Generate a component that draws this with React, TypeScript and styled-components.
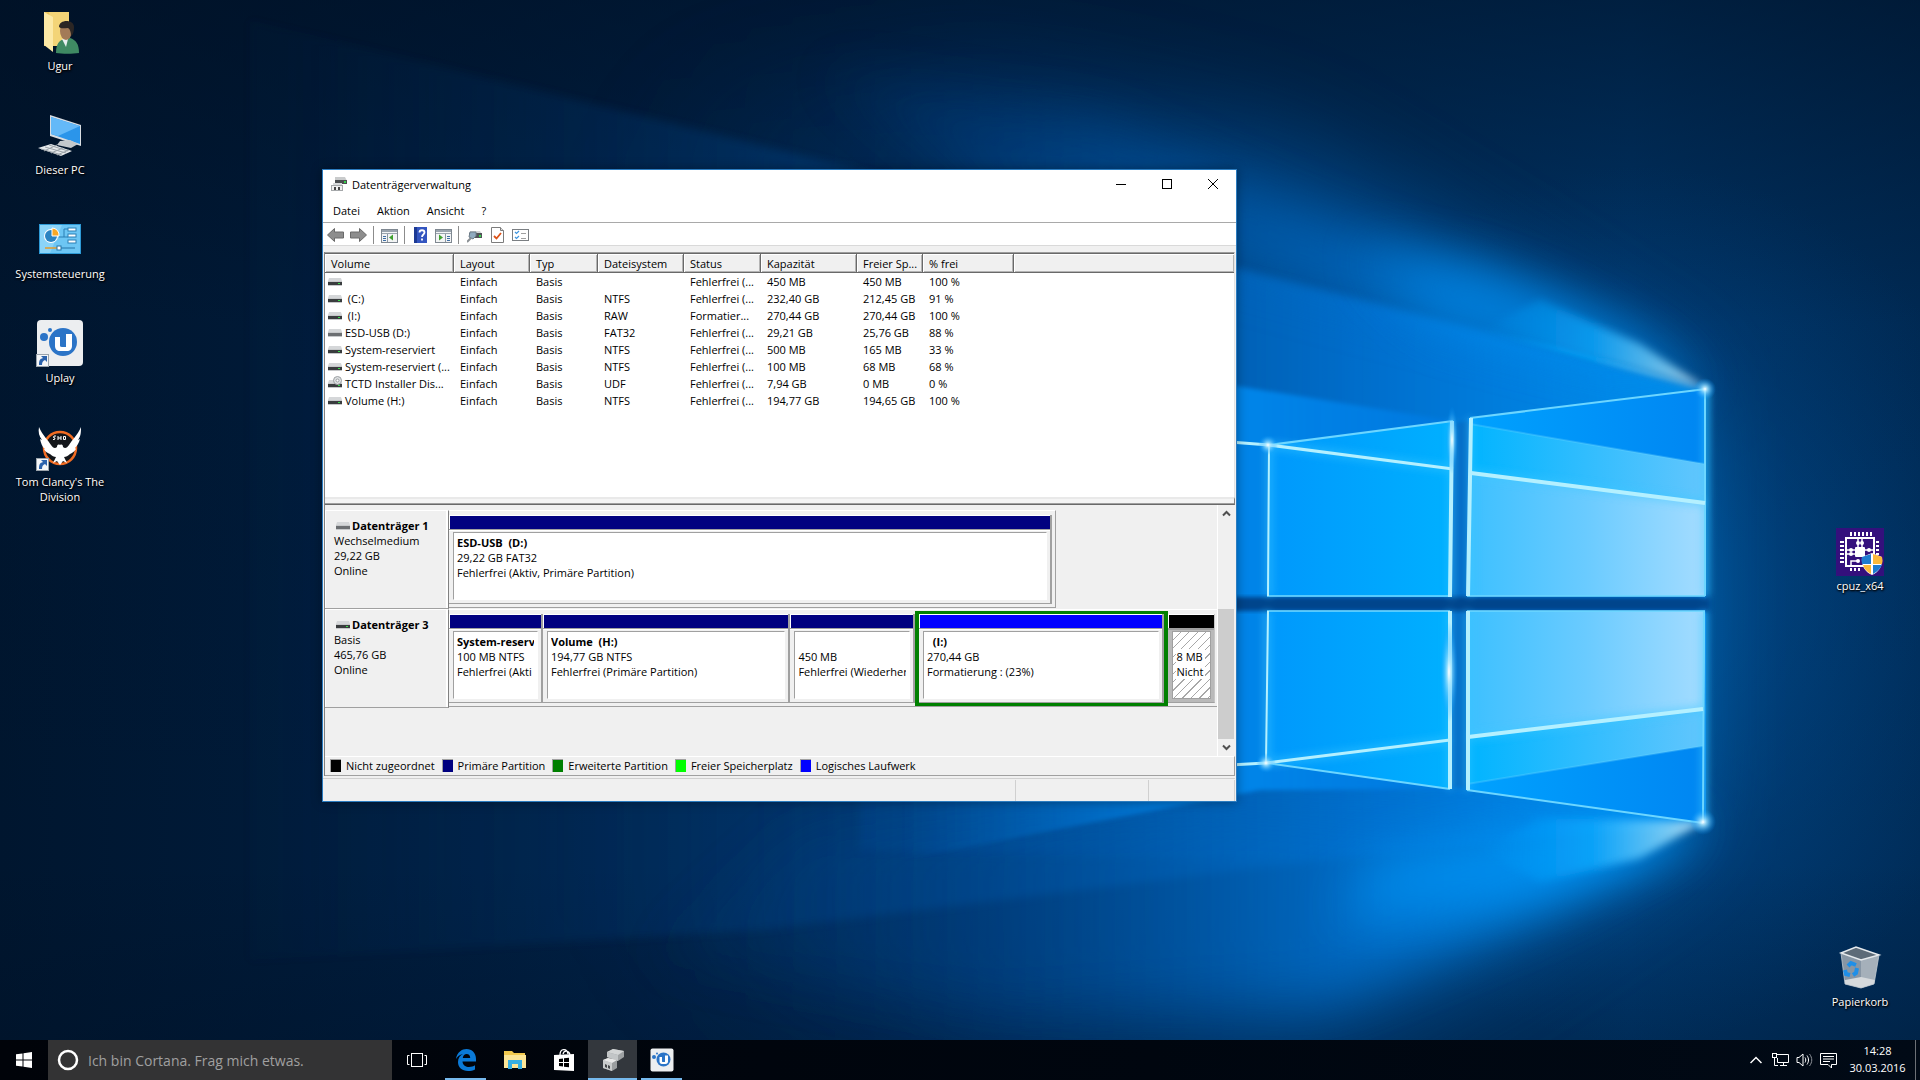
import React from "react";
import styled, { createGlobalStyle } from "styled-components";

const GlobalStyle = createGlobalStyle`
  *, *::before, *::after { box-sizing: border-box; }
  html, body { margin: 0; height: 100%; overflow: hidden; }
  body {
    font-family: "Segoe UI", "Open Sans", "Noto Sans", sans-serif;
    font-size: 11px;
    line-height: 15px;
    color: #000;
    background: #00172f;
  }
  button {
    font: inherit;
    color: inherit;
    background: none;
    border: 0;
    padding: 0;
    margin: 0;
    cursor: default;
  }
  svg { display: block; flex: none; }
`;

/* ---------- Desktop ---------- */

const Screen = styled.main`
  position: relative;
  display: flex;
  flex-direction: column;
  height: 100vh;
  overflow: hidden;
`;

const WallpaperArt = styled.svg`
  position: absolute;
  inset: 0;
  width: 100%;
  height: 100%;
`;

const DesktopGrid = styled.div`
  position: relative;
  flex: 1;
  min-height: 0;
  display: grid;
  grid-template-columns: 120px 1fr 120px;
  grid-template-rows: repeat(10, 104px);
  padding-top: 8px;
  overflow: hidden;
`;

const Shortcut = styled.button<{ $col: number; $row: number }>`
  grid-column: ${(p) => p.$col};
  grid-row: ${(p) => p.$row};
  display: flex;
  flex-direction: column;
  align-items: center;
  gap: 2px;
  color: #fff;
  text-shadow: 1px 1px 2px #000, 0 1px 2px #000;
  align-self: start;
`;

const ShortcutLabel = styled.span`
  max-width: 108px;
  text-align: center;
`;

/* ---------- Window ---------- */

const AppWindow = styled.section`
  position: absolute;
  left: 322px;
  top: 169px;
  width: 915px;
  display: flex;
  flex-direction: column;
  background: #f0f0f0;
  border: 1px solid #2b7cc0;
  box-shadow: 0 0 10px rgba(0, 0, 0, 0.35);
`;

const TitleBar = styled.header`
  display: flex;
  align-items: center;
  height: 28px;
  padding-left: 8px;
  background: #fff;
`;

const Title = styled.h1`
  flex: 1;
  margin: 0 0 0 5px;
  font-size: 11px;
  font-weight: 400;
`;

const CaptionButton = styled.button`
  display: flex;
  align-items: center;
  justify-content: center;
  width: 46px;
  height: 28px;
`;

const MenuBar = styled.nav`
  display: flex;
  align-items: center;
  gap: 17px;
  height: 25px;
  padding-left: 10px;
  background: #fff;
  border-bottom: 1px solid #a9a9a9;
`;

const ToolBar = styled.div`
  display: flex;
  align-items: center;
  height: 23px;
  padding: 2px 0 0 1px;
  background: #fff;
  border-bottom: 1px solid #d9d9d9;
`;

const ToolButton = styled.button`
  display: flex;
  align-items: center;
  justify-content: center;
  width: 23px;
  height: 20px;
`;

const ToolDivider = styled.span`
  width: 1px;
  height: 18px;
  margin: 0 4px 0 3px;
  background: #8c8c8c;
`;

const Body = styled.div`
  margin: 6px 1px 0;
  border-left: 1px solid #808080;
`;

/* ---------- Volume list ---------- */

const VolumePane = styled.div`
  height: 245px;
  background: #fff;
  border-top: 1px solid #9c9c9c;
  border-right: 1px solid #e3e3e3;
  box-shadow: inset 0 1px 0 #696969;
  padding-top: 1px;
`;

const VolumeTable = styled.table`
  width: 100%;
  table-layout: fixed;
  border-collapse: separate;
  border-spacing: 0;
  white-space: pre;
`;

const Col = styled.col<{ $w?: number }>`
  ${(p) => (p.$w ? `width: ${p.$w}px;` : "")}
`;

const HeadCell = styled.th`
  height: 19px;
  padding: 0 0 0 6px;
  overflow: hidden;
  text-align: left;
  font-weight: 400;
  background: #f0f0f0;
  border-bottom: 1px solid #696969;
  border-right: 1px solid #696969;
  box-shadow: inset 1px 1px 0 #fff, inset -1px -1px 0 #b4b4b4;
  &:last-child { border-right: 0; }
`;

const Cell = styled.td`
  height: 17px;
  padding: 0 0 0 6px;
  overflow: hidden;
  line-height: 15px;
`;

const VolumeCell = styled(Cell)`
  padding-left: 3px;
`;

const VolumeName = styled.span`
  display: flex;
  align-items: center;
  gap: 3px;
  height: 15px;
`;

const Splitter = styled.div`
  height: 8px;
  border-top: 2px solid #e9e9e9;
  border-bottom: 1px solid #696969;
  border-right: 1px solid #808080;
  background: #f4f4f4;
  box-shadow: inset 0 -1px 0 #a0a0a0;
`;

/* ---------- Disk graph ---------- */

const GraphPane = styled.div`
  display: grid;
  grid-template-columns: 1fr 16px;
  height: 251px;
  padding-right: 1px;
`;

const DiskList = styled.div`
  padding-top: 5px;
  border-right: 1px solid #fff;
`;

const DiskRow = styled.div`
  display: grid;
  grid-template-columns: 124px 1fr;
  height: 99px;
`;

const DiskLabel = styled.div`
  padding: 7px 0 0 9px;
  border-top: 1px solid #fff;
  border-right: 1px solid #808080;
  border-bottom: 1px solid #a0a0a0;
  box-shadow: inset -2px 0 0 #fff, inset 1px 0 0 #fff;
`;

const DiskName = styled.div`
  display: flex;
  align-items: center;
  gap: 2px;
  padding-left: 2px;
  font-weight: 700;
`;

const DiskBar = styled.div<{ $right: number }>`
  display: flex;
  height: 98px;
  margin-right: ${(p) => p.$right}px;
  padding: 4px ${(p) => (p.$right ? 3 : 2)}px 3px 0;
  border-top: 1px solid #fff;
  border-bottom: 1px solid #a0a0a0;
  border-right: ${(p) => (p.$right ? "1px solid #a0a0a0" : "0")};
`;

const PartitionFrame = styled.div<{ $span: number; $selected?: boolean; $free?: boolean }>`
  position: relative;
  z-index: ${(p) => (p.$selected ? 1 : 0)};
  flex: ${(p) => p.$span} ${(p) => p.$span} 0;
  min-width: 0;
  display: flex;
  flex-direction: column;
  margin: 0 ${(p) => (p.$selected ? 4 : 0)}px;
  background: ${(p) => (p.$free ? "#b9b9b9" : "#f0f0f0")};
  border-right: ${(p) => (p.$free ? "1px solid #c6c6c6" : "2px solid #a0a0a0")};
  border-bottom: 1px solid #a0a0a0;
  box-shadow: ${(p) =>
    p.$selected ? "1px 0 0 3px #008000, -1px 0 0 3px #008000" : "none"};
`;

const Strip = styled.div<{ $color: string }>`
  height: 14px;
  background: ${(p) => p.$color};
  border-top: 1px solid #fff;
  border-left: 1px solid #fff;
`;

const PartitionBox = styled.div<{ $free?: boolean }>`
  flex: 1;
  margin: 1px 3px 3px 4px;
  padding: 2px 3px 0;
  overflow: hidden;
  border: 1px solid #a0a0a0;
  border-right-color: ${(p) => (p.$free ? "#a0a0a0" : "#fff")};
  border-bottom-color: ${(p) => (p.$free ? "#a0a0a0" : "#fff")};
  background: ${(p) =>
    p.$free
      ? "repeating-linear-gradient(135deg, #fff 0 5px, #a8a8a8 5px 6px)"
      : "#fff"};
`;

const PartitionEdge = styled.div<{ $free?: boolean }>`
  height: 2px;
  background: ${(p) => (p.$free ? "#a0a0a0" : "#fff")};
  border-top: 1px solid #a0a0a0;
`;

const PartitionLine = styled.div<{ $bold?: boolean }>`
  height: 15px;
  overflow: hidden;
  white-space: pre;
  font-weight: ${(p) => (p.$bold ? 700 : 400)};
`;

const Plate = styled.span`
  display: inline-block;
  padding-right: 2px;
  background: #fff;
`;

const ScrollTrack = styled.div`
  display: grid;
  grid-template-rows: 17px 87px 130px 17px;
  background: #f0f0f0;
`;

const ScrollArrow = styled.button<{ $row: number }>`
  grid-row: ${(p) => p.$row};
  display: flex;
  align-items: center;
  justify-content: center;
`;

const ScrollThumb = styled.div`
  grid-row: 3;
  background: #cdcdcd;
`;

const Legend = styled.ul`
  display: flex;
  align-items: center;
  gap: 7px;
  height: 20px;
  margin: 0;
  padding: 0 0 1px 5px;
  list-style: none;
  border-top: 1px solid #fff;
  border-right: 1px solid #a0a0a0;
  border-bottom: 1px solid #a0a0a0;
`;

const LegendItem = styled.li`
  display: flex;
  align-items: center;
  gap: 5px;
`;

const Swatch = styled.span<{ $color: string }>`
  width: 11px;
  height: 13px;
  background: ${(p) => p.$color};
  border-top: 1px solid #a0a0a0;
  border-left: 1px solid #a0a0a0;
`;

const StatusBar = styled.footer`
  display: grid;
  grid-template-columns: 1fr 133px 86px;
  height: 23px;
  margin: 2px 1px 0 0;
  padding-top: 1px;
  border-top: 1px solid #d0d0d0;
`;

const StatusCell = styled.div`
  border-right: 1px solid #d0d0d0;
`;

/* ---------- Taskbar ---------- */

const TaskBar = styled.footer`
  position: relative;
  display: flex;
  height: 40px;
  color: #fff;
  background: linear-gradient(90deg, #000309, #00060f 60%, #010a16);
`;

const TaskButton = styled.button<{ $active?: boolean; $open?: boolean }>`
  display: flex;
  align-items: center;
  justify-content: center;
  width: 49px;
  position: relative;
  background: ${(p) => (p.$active ? "#33373d" : "transparent")};
  &::after {
    content: "";
    position: absolute;
    bottom: 0;
    left: ${(p) => (p.$active ? 0 : 4)}px;
    right: ${(p) => (p.$active ? 0 : 4)}px;
    height: 2px;
    background: ${(p) => (p.$active || p.$open ? "#76b9ed" : "transparent")};
  }
`;

const StartButton = styled(TaskButton)`
  width: 48px;
`;

const Search = styled.label`
  display: flex;
  align-items: center;
  gap: 9px;
  width: 344px;
  padding-left: 9px;
  background: #333334;
`;

const SearchInput = styled.input`
  flex: 1;
  min-width: 0;
  border: 0;
  padding: 0;
  outline: 0;
  background: transparent;
  color: #fff;
  font-family: inherit;
  font-size: 14px;
  &::placeholder { color: #a0a0a0; opacity: 1; }
`;

const Tray = styled.div`
  display: flex;
  align-items: center;
  margin-left: auto;
`;

const TrayButton = styled.button`
  display: flex;
  align-items: center;
  justify-content: center;
  width: 24px;
  height: 40px;
`;

const Clock = styled.button`
  display: flex;
  flex-direction: column;
  align-items: center;
  justify-content: center;
  width: 75px;
  padding-bottom: 2px;
  line-height: 17px;
`;

const ShowDesktop = styled.button`
  width: 5px;
  height: 40px;
  border-left: 1px solid #6c7076;
`;

/* ---------- Drawings ---------- */

const Wallpaper = () => (
  <WallpaperArt viewBox="0 0 1920 1080" preserveAspectRatio="xMidYMid slice" aria-hidden="true">
    <defs>
      <linearGradient id="base" x1="0" x2="1">
        <stop offset="0" stopColor="#00162f" />
        <stop offset="0.25" stopColor="#001e40" />
        <stop offset="0.5" stopColor="#002a56" />
        <stop offset="0.85" stopColor="#00386e" />
        <stop offset="1" stopColor="#002c58" />
      </linearGradient>
      <linearGradient id="shade" x1="0" x2="0" y1="0" y2="1">
        <stop offset="0" stopColor="#000f22" stopOpacity="0.6" />
        <stop offset="0.3" stopColor="#000f22" stopOpacity="0.1" />
        <stop offset="0.8" stopColor="#000f22" stopOpacity="0" />
        <stop offset="1" stopColor="#000f22" stopOpacity="0.35" />
      </linearGradient>
      <linearGradient id="fan" gradientUnits="userSpaceOnUse" x1="280" x2="1706" y1="0" y2="0">
        <stop offset="0" stopColor="#003468" stopOpacity="0.1" />
        <stop offset="0.35" stopColor="#004488" stopOpacity="0.6" />
        <stop offset="0.6" stopColor="#0060b4" stopOpacity="0.95" />
        <stop offset="0.78" stopColor="#0078dc" />
        <stop offset="1" stopColor="#009cff" />
      </linearGradient>
      <linearGradient id="glow" gradientUnits="userSpaceOnUse" x1="600" x2="1706" y1="0" y2="0">
        <stop offset="0" stopColor="#003a78" stopOpacity="0" />
        <stop offset="0.35" stopColor="#004a94" stopOpacity="0.5" />
        <stop offset="0.7" stopColor="#0072d0" stopOpacity="0.9" />
        <stop offset="1" stopColor="#009cff" />
      </linearGradient>
      <linearGradient id="inner" gradientUnits="userSpaceOnUse" x1="900" x2="1480" y1="0" y2="0">
        <stop offset="0" stopColor="#0072d0" stopOpacity="0" />
        <stop offset="0.6" stopColor="#0088ee" stopOpacity="0.9" />
        <stop offset="1" stopColor="#0078e0" stopOpacity="0.8" />
      </linearGradient>
      <linearGradient id="paneL" x1="0" x2="1">
        <stop offset="0" stopColor="#0098fc" />
        <stop offset="1" stopColor="#00b0ff" />
      </linearGradient>
      <linearGradient id="paneR" x1="0" x2="1">
        <stop offset="0" stopColor="#3cc0ff" />
        <stop offset="0.5" stopColor="#6acbff" />
        <stop offset="1" stopColor="#a4dcff" />
      </linearGradient>
      <linearGradient id="paneMid" x1="0" x2="1">
        <stop offset="0" stopColor="#00b4ff" />
        <stop offset="1" stopColor="#62c6fd" />
      </linearGradient>
      <linearGradient id="paneDeep" x1="0" x2="1">
        <stop offset="0" stopColor="#00a2ff" />
        <stop offset="1" stopColor="#0086f2" />
      </linearGradient>
      <linearGradient id="wedge" gradientUnits="userSpaceOnUse" x1="1480" x2="1706" y1="0" y2="0">
        <stop offset="0" stopColor="#00a0ff" stopOpacity="0" />
        <stop offset="0.5" stopColor="#10acff" stopOpacity="0.9" />
        <stop offset="0.85" stopColor="#9ce2ff" />
        <stop offset="1" stopColor="#fff" />
      </linearGradient>
      <radialGradient id="flare">
        <stop offset="0" stopColor="#fff" />
        <stop offset="0.25" stopColor="#a8e6ff" stopOpacity="0.8" />
        <stop offset="1" stopColor="#0098ff" stopOpacity="0" />
      </radialGradient>
      <radialGradient id="halo">
        <stop offset="0" stopColor="#0068bc" stopOpacity="0.5" />
        <stop offset="1" stopColor="#004a90" stopOpacity="0" />
      </radialGradient>
      <filter id="b2" x="-20%" y="-20%" width="140%" height="140%"><feGaussianBlur stdDeviation="2" /></filter>
      <filter id="b4" x="-20%" y="-20%" width="140%" height="140%"><feGaussianBlur stdDeviation="4" /></filter>
      <filter id="b12" x="-40%" y="-40%" width="180%" height="180%"><feGaussianBlur stdDeviation="14" /></filter>
      <filter id="b24" x="-40%" y="-40%" width="180%" height="180%"><feGaussianBlur stdDeviation="26" /></filter>
      <filter id="b50" x="-60%" y="-60%" width="220%" height="220%"><feGaussianBlur stdDeviation="50" /></filter>
    </defs>
    <rect width="1920" height="1080" fill="url(#base)" />
    <rect width="1920" height="1080" fill="url(#shade)" />
    <ellipse cx="1640" cy="605" rx="380" ry="440" fill="url(#halo)" />
    <polygon points="1680,395 1500,280 1280,140 980,60 700,80 500,300 500,850 700,1000 1000,1090 1300,1060 1480,960 1680,825" fill="url(#glow)" opacity="0.6" filter="url(#b50)" />
    <polygon points="1706,389 1237,269 780,150 250,20 250,960 760,930 1240,870 1703,823" fill="url(#fan)" filter="url(#b4)" opacity="0.6" />
    <polygon points="1706,389 1237,269 860,172 860,850 1240,860 1703,823" fill="url(#fan)" filter="url(#b4)" opacity="0.5" />
    <polygon points="1704,389 1237,269 1000,205 820,70 1100,120 1340,230 1540,300" fill="url(#glow)" opacity="0.7" filter="url(#b24)" />
    <polygon points="1703,823 1237,800 800,830 640,960 1000,1010 1330,1000 1560,900" fill="url(#glow)" opacity="0.9" filter="url(#b24)" />
    <polygon points="1706,389 1440,322 1360,250 1480,270 1620,330" fill="#0090f4" opacity="0.6" filter="url(#b24)" />
    <polygon points="1703,823 1560,828 1380,860 1340,920 1500,900 1630,862" fill="#0098fa" opacity="0.7" filter="url(#b24)" />
    <polygon points="1453,421 1200,380 900,330 900,860 1260,790 1450,789" fill="url(#inner)" filter="url(#b2)" />
    <polygon points="1706,388 1480,330 1540,300 1640,344" fill="url(#wedge)" opacity="0.75" filter="url(#b4)" />
    <polygon points="1706,389 1480,330 1560,348" fill="url(#wedge)" filter="url(#b2)" />
    <polygon points="1703,822 1540,818 1480,850 1540,882 1640,858" fill="url(#wedge)" opacity="0.8" filter="url(#b4)" />
    <polygon points="1706,389 1706,823 1467,790 1467,418" fill="#0080e6" />
    <polygon points="1453,423 1469,421 1469,788 1450,787" fill="#0068c4" filter="url(#b2)" />
    <rect x="800" y="597" width="910" height="14" fill="#00458c" filter="url(#b2)" />
    <polygon points="1269,445 1453,421 1450,597 1267,596" fill="url(#paneL)" />
    <polygon points="1267,611 1450,611 1450,789 1266,763" fill="url(#paneL)" />
    <polygon points="1470,418 1706,389 1705,596 1467,596" fill="url(#paneDeep)" />
    <polygon points="1470,424 1705,464 1705,596 1467,596" fill="url(#paneMid)" />
    <polygon points="1470,473 1705,503 1705,596 1467,596" fill="url(#paneR)" />
    <polygon points="1467,611 1705,611 1703,823 1467,790" fill="url(#paneDeep)" />
    <polygon points="1467,611 1705,611 1703,746 1467,784" fill="url(#paneMid)" />
    <polygon points="1467,611 1705,611 1704,709 1467,737" fill="url(#paneR)" />
    <g fill="none" stroke="#3cc8ff" strokeWidth="6" opacity="0.6" filter="url(#b4)">
      <path d="M1269 445V596M1452 421V597M1470 418V596M1706 389V596M1267 611V763M1450 611V789M1467 611V790M1704 611V823M1269 445L1453 469M1471 473L1705 503M1266 763L1450 740M1468 737L1703 709" />
    </g>
    <g fill="none" stroke="#6cd6ff" strokeWidth="2">
      <path d="M1269 445L1453 421M1470 418L1706 389M1266 763L1450 789M1467 790L1703 823M1705 389V596M1704 611L1703 823" />
      <path d="M1267 596H1450M1267 611H1450M1467 596H1705M1467 611H1705" opacity="0.8" />
      <path d="M1470 424L1705 464M1467 784L1703 746" opacity="0.3" />
    </g>
    <g fill="none" stroke="#b4f0ff" strokeWidth="3">
      <path d="M1269 445L1268 596M1268 611L1266 763" strokeWidth="2" />
      <path d="M1230 442L1269 445L1453 469M1230 765L1266 763L1450 740" />
      <path d="M1452 421L1450 597M1450 611V789M1471 418L1468 596M1468 611V790" strokeWidth="4" />
      <path d="M1471 473L1705 503M1468 737L1703 709" strokeWidth="4" />
    </g>
    <ellipse cx="1452" cy="440" rx="6" ry="34" fill="url(#flare)" />
    <ellipse cx="1449" cy="672" rx="9" ry="50" fill="url(#flare)" />
    <circle cx="1705" cy="389" r="11" fill="url(#flare)" />
    <circle cx="1703" cy="822" r="13" fill="url(#flare)" />
    <circle cx="1268" cy="445" r="10" fill="url(#flare)" />
    <circle cx="1266" cy="763" r="10" fill="url(#flare)" />
  </WallpaperArt>
);

const UserFolderIcon = () => (
  <svg width="48" height="48" viewBox="0 0 48 48">
    <path d="M8 4h25v34H8z" fill="#e9c35a" />
    <path d="M13 4h20v34H17z" fill="#f3d477" />
    <path d="M8 4l9 5v35l-9-7z" fill="#fce9a6" />
    <path d="M20 45c0-9 3-13 9-14l5-1c6 2 9 6 9 15-6 1-17 1-23 0z" fill="#3f8a63" />
    <path d="M26 31l4 8 2-8z" fill="#e8eef0" />
    <ellipse cx="30" cy="23" rx="6" ry="9" fill="#a37a57" />
    <path d="M23 19c0-8 15-8 15 0 0 4-1 8-3 9 0-4-1-7-3-8-4 0-7 1-9-1z" fill="#2b2624" />
  </svg>
);

const ComputerIcon = () => (
  <svg width="48" height="48" viewBox="0 0 48 48">
    <path d="M14 3l31 10v21L14 24z" fill="#d8dde2" />
    <path d="M15 5l29 9v18L15 22z" fill="#2b95ea" />
    <path d="M15 5l29 9-22 10-7-2z" fill="#64b9f8" />
    <path d="M24 29l10-1 8 4-7 4-14-3z" fill="#c3c8cc" />
    <path d="M2 36l13-4 21 7-11 5z" fill="#e6e9eb" />
    <path d="M5 37l21 6M9 35l21 6M13 33l19 6M8 39l13-6M15 41l12-5M21 43l12-5" stroke="#9aa2a8" strokeWidth="1" />
  </svg>
);

const ControlPanelIcon = () => (
  <svg width="48" height="48" viewBox="0 0 48 48">
    <rect x="3" y="8" width="42" height="30" fill="#2e9ad6" />
    <rect x="4" y="9" width="40" height="28" fill="#6dc6f4" />
    <path d="M4 9h22L14 37H4z" fill="#8bd4f8" />
    <circle cx="15" cy="20" r="7" fill="#fff" />
    <circle cx="15" cy="20" r="6" fill="#2a83c2" />
    <path d="M16 12v8h7a7 7 0 0 0-7-8z" fill="#f9a826" stroke="#fff" strokeWidth="1" />
    <path d="M23 21h5v-8h4M28 21h4" fill="none" stroke="#2a7fb4" strokeWidth="1" />
    <g fill="#fff" stroke="#2a7fb4" strokeWidth="1">
      <rect x="32" y="12" width="8" height="3" /><rect x="32" y="18" width="8" height="3" /><rect x="32" y="24" width="8" height="3" />
    </g>
    <path d="M9 32h12" stroke="#e39b2d" strokeWidth="1.5" />
    <path d="M24 32h15" stroke="#2574a8" strokeWidth="1" />
    <rect x="21" y="30" width="4" height="4" fill="#fff" stroke="#2574a8" />
  </svg>
);

const ShortcutArrow = () => (
  <g>
    <rect x="0.5" y="34.5" width="12" height="12" fill="#f4f6f8" stroke="#9aa3ab" />
    <path d="M3 45c0-5 1-6 4-7l-2-2h6v6l-2-2c-2 1-3 2-3 5z" fill="#2b62ac" />
  </g>
);

const UplayMark = () => (
  <>
    <rect x="1" y="0" width="46" height="46" rx="4" fill="#eceef0" />
    <circle cx="27" cy="22" r="14" fill="#2b74c7" />
    <circle cx="8" cy="17" r="4" fill="#2b74c7" />
    <circle cx="14" cy="10" r="2" fill="#2b74c7" />
    <path d="M19 17h5v8c0 1 0 2 2 2h4V14h6v12c0 3-2 5-5 5h-7c-3 0-5-2-5-5z" fill="#fff" />
  </>
);

const UplayIcon = () => (
  <svg width="48" height="48" viewBox="0 0 48 48"><UplayMark /><ShortcutArrow /></svg>
);

const DivisionIcon = () => (
  <svg width="48" height="48" viewBox="0 0 48 48">
    <circle cx="24" cy="24" r="16" fill="#14161a" stroke="#f26c22" strokeWidth="2.5" />
    <path d="M24 21c2-1 3 0 3 2 2 2 4 1 6-2 3-5 8-9 12-18 0 5 0 9-3 13l2-1c-1 4-3 7-5 9l1 1c-2 3-4 4-6 5-2 2-4 3-6 3l3 6-4-2-3 4-3-4-4 2 3-6c-2 0-4-1-6-3-2-1-5-2-6-5h1c-3-2-4-6-5-10l2 1C3 12 2 8 3 3c4 9 9 13 12 18 2 3 4 4 6 2 0-2 1-3 3-2z" fill="#fff" />
    <path d="M20 12h-2l-.5 1.500 1.500.5-.5 1.500h-1.500M22 12v4M25 12v4M22 14h3M27.500 12.500h2v3h-2z" stroke="#fff" fill="none" strokeWidth="1" />
    <ShortcutArrow />
  </svg>
);

const CpuIcon = () => (
  <svg width="48" height="48" viewBox="0 0 48 48">
    <rect width="48" height="48" fill="#34107c" />
    <rect x="10" y="10" width="28" height="28" fill="none" stroke="#fff" strokeWidth="2" />
    <rect x="19" y="19" width="10" height="10" rx="1" fill="#fff" />
    <path d="M15 4v4M19 4v4M23 4v4M27 4v4M31 4v4M35 4v4M15 40v3M19 40v3M23 40v3M4 14h4M4 18h4M4 22h4M4 26h4M4 30h4M4 34h4M40 14h3M40 18h3M40 22h3M40 26h3" stroke="#fff" strokeWidth="2" />
    <path d="M22 19v-8M26 19v-8M19 22h-8M19 26h-8M29 22h8M15 37v-4h7" stroke="#fff" strokeWidth="1.5" fill="none" />
    <g fill="#fff"><circle cx="22" cy="15" r="2" /><circle cx="26" cy="15" r="2" /><circle cx="15" cy="22" r="2" /><circle cx="15" cy="26" r="2" /><circle cx="33" cy="22" r="2" /><circle cx="22" cy="33" r="2" /></g>
    <path d="M36 25l10 4c1 9-3 15-10 18-7-3-11-9-10-18z" fill="#fff" />
    <path d="M35 26v10h-9q-1-4 0-7z" fill="#1d7bd0" /><path d="M37 26l9 3q1 4 0 7h-9z" fill="#fbb93a" />
    <path d="M35 37v9q-6-3-8-9z" fill="#fbb93a" /><path d="M37 37h9q-3 6-9 9z" fill="#1d7bd0" />
  </svg>
);

const BinIcon = () => (
  <svg width="48" height="48" viewBox="0 0 48 48">
    <path d="M5 9l4 31 16 4V15z" fill="#8796a5" />
    <path d="M25 15v29l13-4 5-29z" fill="#a5b0ba" />
    <path d="M9 36l16-3 14 3-1 4-13 4-16-4z" fill="#d5d9dc" />
    <path d="M5 9l15-6 23 8-18 5z" fill="#5d6b78" stroke="#e6eaed" strokeWidth="1.5" />
    <path d="M5 9l4 31 16 4 13-4 5-29" fill="none" stroke="#c3ccd3" strokeWidth="0.8" />
    <g fill="none" stroke="#1e8fe8" strokeWidth="4"><path d="M12 22l3-3 5 2" /><path d="M21 24l-1 5-3 2" /><path d="M9 26l1 4 4 1" /></g>
  </svg>
);

const WindowIcon = () => (
  <svg width="16" height="16" viewBox="0 0 16 16">
    <path d="M4 1h10l2 4v3H4z" fill="#c9cbcc" />
    <path d="M4 4h12v4H4z" fill="#4b4e50" />
    <rect x="13" y="5" width="2" height="2" fill="#35d04a" />
    <path d="M2 7h9v4H2z" fill="#d8dadb" />
    <path d="M0 9h12v6H0z" fill="#a5a8aa" />
    <path d="M1 10h10v4H1z" fill="#f1f1f1" />
    <path d="M3 11h2v3H3zM7 11h2v3H7z" fill="#444" />
  </svg>
);

const DriveIcon = ({ kind }: { kind: "disk" | "usb" | "disc" }) => (
  <svg width="14" height="15" viewBox="0 0 14 15">
    <path d="M1 4h12l1 3H0z" fill="#d5d7d9" />
    <path d="M0 7h14v4H0z" fill={kind === "usb" ? "#6c6f72" : "#393c3e"} />
    <path d="M0 7h14v1H0zM0 11h14v1H0z" fill="#c6c8ca" />
    {kind !== "usb" && <rect x="10" y="9" width="2" height="1" fill="#39e04c" />}
    {kind === "disc" && (
      <g><circle cx="9.500" cy="4.500" r="4" fill="#dfe1e3" stroke="#9a9ea1" /><circle cx="9.500" cy="4.500" r="1.500" fill="#fff" stroke="#9a9ea1" /></g>
    )}
  </svg>
);

const ArrowIcon = ({ back }: { back?: boolean }) => (
  <svg width="17" height="16" viewBox="0 0 17 16">
    <path d={back ? "M0.500 8l7-6.500v3.500h9v6h-9v3.500z" : "M16.500 8l-7-6.500v3.500h-9v6h9v3.500z"} fill="#8d8d8d" stroke="#6a6a6a" />
  </svg>
);

const PanelIcon = ({ right }: { right?: boolean }) => (
  <svg width="17" height="16" viewBox="0 0 17 16">
    <rect x="0.500" y="2.500" width="16" height="13" fill="#f3f4f5" stroke="#7f8891" />
    <path d="M1 3h15v2H1z" fill="#9aa4ae" />
    <path d="M1 6.500h15" stroke="#9aa4ae" />
    {right ? (
      <><path d="M10.500 7v8" stroke="#8c97a1" /><path d="M12 9.500h3M12 11.500h3M12 13.500h3" stroke="#3d6ea5" /><path d="M4 7.500v6l4-3z" fill="#3fa12f" /></>
    ) : (
      <><path d="M6.500 7v8" stroke="#8c97a1" /><path d="M2 9.500h3M2 11.500h3M2 13.500h3" stroke="#3d6ea5" /><path d="M12 7.500v6l-4-3z" fill="#3fa12f" /></>
    )}
  </svg>
);

const HelpIcon = () => (
  <svg width="14" height="16" viewBox="0 0 14 16">
    <rect width="13" height="16" fill="#3355c0" />
    <rect width="3" height="16" fill="#1d3a94" />
    <path d="M5.500 5.500c0-3 5-3 5 0 0 2-2.500 2-2.500 4.500M8 11.500v2" fill="none" stroke="#fff" strokeWidth="1.800" />
  </svg>
);

const ConnectIcon = () => (
  <svg width="16" height="16" viewBox="0 0 16 16">
    <path d="M3 4h10l2 3H2z" fill="#d1d4d6" />
    <path d="M2 6h13v5H3z" fill="#505457" />
    <rect x="12" y="8" width="2" height="2" fill="#39d84b" />
    <path d="M3 5h6v4l-3 3-4-2z" fill="#8faabf" stroke="#6e7d89" />
    <path d="M4 11l-4 4" stroke="#8a8f93" strokeWidth="2" />
  </svg>
);

const CheckPageIcon = () => (
  <svg width="13" height="16" viewBox="0 0 13 16">
    <path d="M0.500 0.500h9l3 3v12h-12z" fill="#fff" stroke="#7c7c7c" />
    <path d="M9.500 0.500v3h3" fill="#ddd" stroke="#7c7c7c" />
    <path d="M3 9l2.500 2.500L10 6" fill="none" stroke="#dd5218" strokeWidth="1.800" />
  </svg>
);

const ListIcon = () => (
  <svg width="17" height="14" viewBox="0 0 17 14">
    <rect x="0.500" y="1.500" width="16" height="11" fill="#fff" stroke="#7b7f83" />
    <path d="M3 4l1.500 1.500L7 3M3 9l1.500 1.500L7 8" fill="none" stroke="#3e95df" strokeWidth="1.200" />
    <path d="M9 5.500h5M9 10.500h5" stroke="#a0a0a0" />
  </svg>
);

const ChevronIcon = ({ down }: { down?: boolean }) => (
  <svg width="9" height="7" viewBox="0 0 9 7">
    <path d={down ? "M1 1.500l3.500 3.500L8 1.500" : "M1 5.500L4.500 2 8 5.500"} fill="none" stroke="#505050" strokeWidth="2" />
  </svg>
);

const DiskTaskIcon = () => (
  <svg width="25" height="26" viewBox="0 0 25 26">
    <path d="M7 5l6-3 11 2v6l-6 4-11-4z" fill="#9ea1a3" />
    <path d="M7 5l6-3 11 2-6 4z" fill="#d3d5d6" />
    <path d="M7 5l11 3v6L7 10z" fill="#c2c5c7" />
    <path d="M3 13l5-2 9 2v8l-5 3-9-3z" fill="#9b9ea0" />
    <path d="M3 13l9 3v8l-9-3z" fill="#c9cbcc" />
    <path d="M3 13l5-2 9 2-5 3z" fill="#e9e9e9" />
    <path d="M5 17l2 1v3l-2-1zM8 18l2 1v3l-2-1z" fill="#44474a" />
  </svg>
);

/* ---------- Data ---------- */

const columns: { label: string; width?: number }[] = [
  { label: "Volume", width: 129 },
  { label: "Layout", width: 76 },
  { label: "Typ", width: 68 },
  { label: "Dateisystem", width: 86 },
  { label: "Status", width: 77 },
  { label: "Kapazität", width: 96 },
  { label: "Freier Sp...", width: 66 },
  { label: "% frei", width: 91 },
  { label: "" },
];

type Volume = { kind: "disk" | "usb" | "disc"; cells: string[] };

const volumes: Volume[] = [
  { kind: "disk", cells: ["", "Einfach", "Basis", "", "Fehlerfrei (...", "450 MB", "450 MB", "100 %"] },
  { kind: "disk", cells: [" (C:)", "Einfach", "Basis", "NTFS", "Fehlerfrei (...", "232,40 GB", "212,45 GB", "91 %"] },
  { kind: "disk", cells: [" (I:)", "Einfach", "Basis", "RAW", "Formatier...", "270,44 GB", "270,44 GB", "100 %"] },
  { kind: "usb", cells: ["ESD-USB (D:)", "Einfach", "Basis", "FAT32", "Fehlerfrei (...", "29,21 GB", "25,76 GB", "88 %"] },
  { kind: "disk", cells: ["System-reserviert", "Einfach", "Basis", "NTFS", "Fehlerfrei (...", "500 MB", "165 MB", "33 %"] },
  { kind: "disk", cells: ["System-reserviert (...", "Einfach", "Basis", "NTFS", "Fehlerfrei (...", "100 MB", "68 MB", "68 %"] },
  { kind: "disc", cells: ["TCTD Installer Dis...", "Einfach", "Basis", "UDF", "Fehlerfrei (...", "7,94 GB", "0 MB", "0 %"] },
  { kind: "disk", cells: ["Volume (H:)", "Einfach", "Basis", "NTFS", "Fehlerfrei (...", "194,77 GB", "194,65 GB", "100 %"] },
];

type PartitionInfo = {
  span: number;
  color: string;
  lines: string[];
  selected?: boolean;
  free?: boolean;
};

type Disk = {
  name: string;
  kind: "disk" | "usb";
  info: string[];
  right: number;
  partitions: PartitionInfo[];
};

const disks: Disk[] = [
  {
    name: "Datenträger 1",
    kind: "usb",
    info: ["Wechselmedium", "29,22 GB", "Online"],
    right: 161,
    partitions: [
      { span: 1, color: "#000080", lines: ["ESD-USB  (D:)", "29,22 GB FAT32", "Fehlerfrei (Aktiv, Primäre Partition)"] },
    ],
  },
  {
    name: "Datenträger 3",
    kind: "disk",
    info: ["Basis", "465,76 GB", "Online"],
    right: 0,
    partitions: [
      { span: 93, color: "#000080", lines: ["System-reserv", "100 MB NTFS", "Fehlerfrei (Akti"] },
      { span: 248, color: "#000080", lines: ["Volume  (H:)", "194,77 GB NTFS", "Fehlerfrei (Primäre Partition)"] },
      { span: 124, color: "#000080", lines: ["", "450 MB", "Fehlerfrei (Wiederher"] },
      { span: 246, color: "#0000ff", lines: ["  (I:)", "270,44 GB", "Formatierung : (23%)"], selected: true },
      { span: 46, color: "#000000", lines: ["", "8 MB", "Nicht"], free: true },
    ],
  },
];

const legend = [
  { label: "Nicht zugeordnet", color: "#000000" },
  { label: "Primäre Partition", color: "#000080" },
  { label: "Erweiterte Partition", color: "#008000" },
  { label: "Freier Speicherplatz", color: "#00ff00" },
  { label: "Logisches Laufwerk", color: "#0000ff" },
];

const shortcuts = [
  { label: "Ugur", col: 1, row: 1, icon: <UserFolderIcon /> },
  { label: "Dieser PC", col: 1, row: 2, icon: <ComputerIcon /> },
  { label: "Systemsteuerung", col: 1, row: 3, icon: <ControlPanelIcon /> },
  { label: "Uplay", col: 1, row: 4, icon: <UplayIcon /> },
  { label: "Tom Clancy's The Division", col: 1, row: 5, icon: <DivisionIcon /> },
  { label: "cpuz_x64", col: 3, row: 6, icon: <CpuIcon /> },
  { label: "Papierkorb", col: 3, row: 10, icon: <BinIcon /> },
];

/* ---------- Parts ---------- */

const Partition = ({ part }: { part: PartitionInfo }) => (
  <PartitionFrame $span={part.span} $selected={part.selected} $free={part.free}>
    <Strip $color={part.color} />
    <PartitionEdge $free={part.free} />
    <PartitionBox $free={part.free}>
      {part.lines.map((line, i) => (
        <PartitionLine key={i} $bold={i === 0}>
          {part.free ? <Plate>{line}</Plate> : line}
        </PartitionLine>
      ))}
    </PartitionBox>
  </PartitionFrame>
);

const DiskManagement = () => (
  <AppWindow aria-label="Datenträgerverwaltung">
    <TitleBar>
      <WindowIcon />
      <Title>Datenträgerverwaltung</Title>
      <CaptionButton aria-label="Minimieren">
        <svg width="10" height="10"><path d="M0 5.500h10" stroke="#000" /></svg>
      </CaptionButton>
      <CaptionButton aria-label="Maximieren">
        <svg width="10" height="10"><rect x="0.500" y="0.500" width="9" height="9" fill="none" stroke="#000" /></svg>
      </CaptionButton>
      <CaptionButton aria-label="Schließen">
        <svg width="10" height="10"><path d="M0 0l10 10M10 0L0 10" stroke="#000" /></svg>
      </CaptionButton>
    </TitleBar>
    <MenuBar>
      <button>Datei</button>
      <button>Aktion</button>
      <button>Ansicht</button>
      <button>?</button>
    </MenuBar>
    <ToolBar>
      <ToolButton aria-label="Zurück"><ArrowIcon back /></ToolButton>
      <ToolButton aria-label="Vorwärts"><ArrowIcon /></ToolButton>
      <ToolDivider />
      <ToolButton aria-label="Konsolenstruktur"><PanelIcon /></ToolButton>
      <ToolDivider />
      <ToolButton aria-label="Hilfe"><HelpIcon /></ToolButton>
      <ToolButton aria-label="Aktionsbereich"><PanelIcon right /></ToolButton>
      <ToolDivider />
      <ToolButton aria-label="Verbinden"><ConnectIcon /></ToolButton>
      <ToolButton aria-label="Aktualisieren"><CheckPageIcon /></ToolButton>
      <ToolButton aria-label="Einstellungen"><ListIcon /></ToolButton>
    </ToolBar>
    <Body>
      <VolumePane>
        <VolumeTable>
          <colgroup>
            {columns.map((c, i) => <Col key={i} $w={c.width} />)}
          </colgroup>
          <thead>
            <tr>{columns.map((c, i) => <HeadCell key={i}>{c.label}</HeadCell>)}</tr>
          </thead>
          <tbody>
            {volumes.map((v, r) => (
              <tr key={r}>
                <VolumeCell>
                  <VolumeName><DriveIcon kind={v.kind} />{v.cells[0]}</VolumeName>
                </VolumeCell>
                {v.cells.slice(1).map((text, i) => <Cell key={i}>{text}</Cell>)}
              </tr>
            ))}
          </tbody>
        </VolumeTable>
      </VolumePane>
      <Splitter />
      <GraphPane>
        <DiskList>
          {disks.map((d) => (
            <DiskRow key={d.name}>
              <DiskLabel>
                <DiskName><DriveIcon kind={d.kind} />{d.name}</DiskName>
                {d.info.map((line) => <div key={line}>{line}</div>)}
              </DiskLabel>
              <DiskBar $right={d.right}>
                {d.partitions.map((p, i) => <Partition key={i} part={p} />)}
              </DiskBar>
            </DiskRow>
          ))}
        </DiskList>
        <ScrollTrack>
          <ScrollArrow $row={1} aria-label="Nach oben"><ChevronIcon /></ScrollArrow>
          <ScrollThumb />
          <ScrollArrow $row={4} aria-label="Nach unten"><ChevronIcon down /></ScrollArrow>
        </ScrollTrack>
      </GraphPane>
      <Legend>
        {legend.map((l) => (
          <LegendItem key={l.label}><Swatch $color={l.color} />{l.label}</LegendItem>
        ))}
      </Legend>
    </Body>
    <StatusBar><StatusCell /><StatusCell /><StatusCell /></StatusBar>
  </AppWindow>
);

export default function App() {
  return (
    <Screen>
      <GlobalStyle />
      <Wallpaper />
      <DesktopGrid>
        {shortcuts.map((s) => (
          <Shortcut key={s.label} $col={s.col} $row={s.row}>
            {s.icon}
            <ShortcutLabel>{s.label}</ShortcutLabel>
          </Shortcut>
        ))}
      </DesktopGrid>
      <DiskManagement />
      <TaskBar>
        <StartButton aria-label="Start">
          <svg width="16" height="16" viewBox="0 0 16 16"><path d="M0 2.300L6.500 1.400V7.500H0zM7.500 1.200L16 0v7.500H7.500zM0 8.500h6.500v6.100L0 13.700zM7.500 8.500H16V16l-8.500-1.200z" fill="#fff" /></svg>
        </StartButton>
        <Search>
          <svg width="22" height="22" viewBox="0 0 22 22"><circle cx="11" cy="11" r="9" fill="none" stroke="#fff" strokeWidth="2.500" /></svg>
          <SearchInput aria-label="Suche" placeholder="Ich bin Cortana. Frag mich etwas." />
        </Search>
        <TaskButton aria-label="Taskansicht">
          <svg width="20" height="14" viewBox="0 0 20 14" fill="none" stroke="#fff"><rect x="4.500" y="0.500" width="11" height="13" /><path d="M2.500 2.500h-2v9h2M17.500 2.500h2v9h-2" /></svg>
        </TaskButton>
        <TaskButton $open aria-label="Edge">
          <svg width="22" height="22" viewBox="0 0 22 22"><path d="M1 10C2 3 7 0 11.500 0 17 0 21 4 21 10v2.500H7.500c.3 4 3.500 5.500 6.500 5.500 2.500 0 4.500-.7 6-1.700v4.200c-2 1-4.300 1.500-7 1.500-6 0-10-3.500-10-9C3 9 5 6.500 8 5 4.500 5.700 2.500 7.500 1 10zM7.800 9h7.400c0-2.500-1.400-4-3.500-4-2.200 0-3.500 1.500-3.900 4z" fill="#0a7ad8" /></svg>
        </TaskButton>
        <TaskButton aria-label="Explorer">
          <svg width="22" height="20" viewBox="0 0 22 20"><path d="M0 1h8l2 2h11v15H0z" fill="#f2c94e" /><path d="M0 5h22v13H0z" fill="#fce596" /><path d="M4 10h14v9h-4v-5H8v5H4z" fill="#35aee2" /></svg>
        </TaskButton>
        <TaskButton aria-label="Store">
          <svg width="22" height="24" viewBox="0 0 22 24"><path d="M7 7c0-7 7-7 8-1M10 6c1-4 6-4 7 1" fill="none" stroke="#fff" strokeWidth="1.300" /><path d="M1 7l20-1v17L1 22z" fill="#fff" /><path d="M6 11l4-.5V14H6zM11 10.300l5-.6V14h-5zM6 15h4v3.500L6 18zM11 15h5v4.300l-5-.6z" fill="#000" /></svg>
        </TaskButton>
        <TaskButton $active aria-label="Datenträgerverwaltung"><DiskTaskIcon /></TaskButton>
        <TaskButton $open aria-label="Uplay">
          <svg width="24" height="24" viewBox="0 0 48 46"><UplayMark /></svg>
        </TaskButton>
        <Tray>
          <TrayButton aria-label="Ausgeblendete Symbole">
            <svg width="12" height="8" viewBox="0 0 12 8"><path d="M0.500 7L6 1.500 11.500 7" fill="none" stroke="#fff" strokeWidth="1.500" /></svg>
          </TrayButton>
          <TrayButton aria-label="Netzwerk">
            <svg width="17" height="14" viewBox="0 0 17 14" fill="none" stroke="#fff"><path d="M5 1.500h11.500v8h-11V5M8 12.500h7M11.500 10v2" /><rect x="0.500" y="0.500" width="4" height="4" /><path d="M2.500 5v7.500H6" /></svg>
          </TrayButton>
          <TrayButton aria-label="Lautstärke">
            <svg width="17" height="14" viewBox="0 0 17 14" fill="none" stroke="#fff"><path d="M1 4.500h2l4-3.500v12L3 9.500H1zM9 4.500c1 1.500 1 3.500 0 5M11 2.500c2 3 2 6 0 9" /><path d="M13.500 1c3 4 3 8 0 12" stroke="#8b8f95" /></svg>
          </TrayButton>
          <TrayButton aria-label="Info-Center">
            <svg width="17" height="17" viewBox="0 0 17 17" fill="none" stroke="#fff"><path d="M0.500 1.500h16v11h-5v3.500l-3.500-3.500h-7.500z" /><path d="M3 4.500h11M3 7h11M3 9.500h7" /></svg>
          </TrayButton>
          <Clock><span>14:28</span><span>30.03.2016</span></Clock>
          <ShowDesktop aria-label="Desktop anzeigen" />
        </Tray>
      </TaskBar>
    </Screen>
  );
}
